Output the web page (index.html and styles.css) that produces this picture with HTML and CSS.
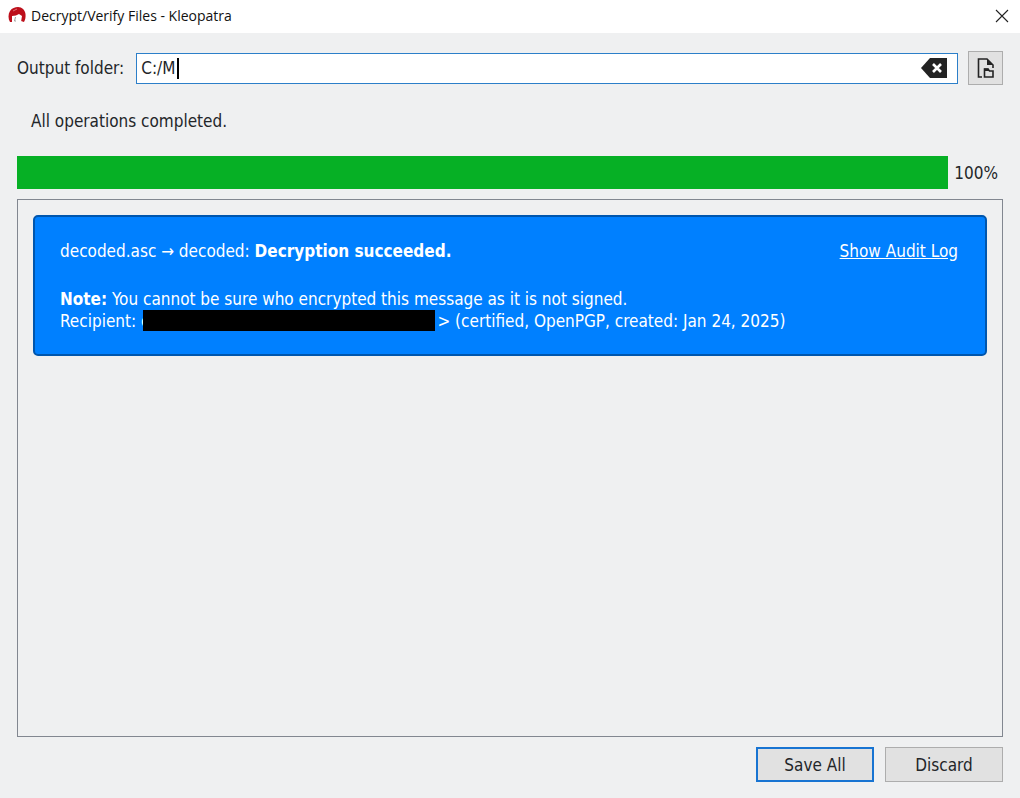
FILE: index.html
```html
<!DOCTYPE html>
<html lang="en">
<head>
    <meta charset="UTF-8">
    <meta name="viewport" content="width=device-width, initial-scale=1.0">
    <title>Decrypt/Verify Files - Kleopatra</title>
    <link rel="stylesheet" href="styles.css">
</head>
<body>
    <header class="titlebar">
        <svg class="app-icon" viewBox="0 0 18 18" aria-hidden="true">
            <path d="M2 15C0 12 0 7 2 4c2-3 5-4 8-4 4 0 7 3 7.500 7 .3 3-.2 6-1.500 8l-3-1-8 1z" fill="#bd0f1b"/>
            <path d="M4 9c3 0 5-1 7-2l3 2-1 6-3 2.500H6L4 15z" fill="#fff"/>
            <path d="M7.500 10L6.500 14h1.500" fill="none" stroke="#888" stroke-width=".8"/>
            <path d="M5 4l4-2" stroke="#dd7378" stroke-width="1"/>
        </svg>
        <h1>Decrypt/Verify Files - Kleopatra</h1>
        <button type="button" class="close" aria-label="Close">
            <svg viewBox="0 0 14 14" aria-hidden="true"><path d="M1 1l12 12M13 1L1 13" fill="none" stroke="#222" stroke-width="1.1"/></svg>
        </button>
    </header>

    <main class="dialog">
        <div class="folder-row">
            <label for="outputFolder">Output folder:</label>
            <div class="field">
                <input type="text" id="outputFolder" name="outputFolder" value="C:/M">
                <span class="caret"></span>
                <button type="button" class="clear" aria-label="Clear">
                    <svg viewBox="0 0 26 20" aria-hidden="true">
                        <path d="M0 10L9 0h17v20H9z" fill="#232323"/>
                        <path d="M12 6l8 8M20 6l-8 8" stroke="#fff" stroke-width="2.6"/>
                    </svg>
                </button>
            </div>
            <button type="button" class="browse" aria-label="Select folder">
                <svg viewBox="0 0 18 20" aria-hidden="true">
                    <path d="M5 19H1.500V1H10l6 6v3" fill="none" stroke="#232323" stroke-width="1.6"/>
                    <path d="M10 1v6h6z" fill="#232323"/>
                    <path d="M7.500 19v-8H11l1.500 2H16v6z" fill="none" stroke="#232323" stroke-width="1.6"/>
                    <path d="M7 10.500h4.500l1 2.500H7z" fill="#232323"/>
                </svg>
            </button>
        </div>

        <p class="status" id="status">All operations completed.</p>

        <div class="progress-row">
            <progress value="100" max="100" aria-labelledby="status"></progress>
            <span>100%</span>
        </div>

        <section class="results">
            <article class="result">
                <div class="result-head">
                    <p>decoded.asc → decoded: <b>Decryption succeeded.</b></p>
                    <a href="#">Show Audit Log</a>
                </div>
                <p><b>Note:</b> You cannot be sure who encrypted this message as it is not signed.</p>
                <p>Recipient: c<span class="redacted"></span>&gt; (certified, OpenPGP, created: Jan 24, 2025)</p>
            </article>
        </section>

        <div class="actions">
            <button type="button" class="default">Save All</button>
            <button type="button">Discard</button>
        </div>
    </main>
</body>
</html>
```
FILE: styles.css
```css
* {
    box-sizing: border-box;
}

body {
    display: flex;
    flex-direction: column;
    min-height: 100vh;
    margin: 0;
    background: #eff0f1;
    color: #232629;
    font-family: "DejaVu Sans Condensed", "Noto Sans", sans-serif;
    font-size: 17px;
    line-height: 22px;
}

p {
    margin: 0;
}

button {
    padding: 0;
    font: inherit;
    color: inherit;
}

svg {
    display: block;
}

/* Title bar */
.titlebar {
    display: flex;
    align-items: center;
    height: 33px;
    padding: 0 11px 2px 8px;
    background: #fff;
}

.titlebar h1 {
    flex: 1;
    margin: 0 0 0 5px;
    color: #111;
    font-family: "Open Sans", "Noto Sans", sans-serif;
    font-size: 14px;
    font-weight: normal;
}

.app-icon {
    width: 18px;
    height: 18px;
}

.close {
    border: 0;
    background: none;
}

.close svg {
    width: 14px;
    height: 14px;
}

/* Dialog body */
.dialog {
    display: flex;
    flex: 1;
    flex-direction: column;
    padding: 18px 17px 16px;
}

.folder-row {
    display: flex;
    align-items: center;
    gap: 10px;
}

.folder-row label {
    padding-right: 2px;
}

.field {
    position: relative;
    flex: 1;
}

.field input {
    display: block;
    width: 100%;
    height: 31px;
    padding: 0 40px 0 4px;
    border: 1px solid #2c7fc9;
    outline: none;
    background: #fff;
    color: inherit;
    font: inherit;
}

.caret {
    position: absolute;
    top: 5px;
    left: 41px;
    width: 2px;
    height: 21px;
    background: #000;
}

.clear {
    position: absolute;
    top: 5px;
    right: 11px;
    border: 0;
    background: none;
}

.clear svg {
    width: 26px;
    height: 20px;
}

.browse {
    display: grid;
    place-items: center;
    width: 35px;
    height: 34px;
    border: 1px solid #adadad;
    background: #e1e1e1;
}

.browse svg {
    width: 18px;
    height: 20px;
}

.status {
    margin: 25px 14px 24px;
}

/* Progress */
.progress-row {
    display: flex;
    align-items: center;
    gap: 6px;
    padding-right: 5px;
}

progress {
    flex: 1;
    min-width: 0;
    height: 33px;
    border: 0;
    appearance: none;
    background: #06b025;
}

progress::-webkit-progress-bar {
    background: #e6e6e6;
}

progress::-webkit-progress-value {
    background: #06b025;
}

/* Results */
.results {
    flex: 1;
    margin: 10px 0;
    padding: 15px;
    border: 1px solid #828790;
}

.result {
    padding: 23px 27px 22px 25px;
    border: 2px solid #0056ad;
    border-radius: 5px;
    background: #0080ff;
    color: #fff;
}

.result-head {
    display: flex;
    justify-content: space-between;
    margin-bottom: 26px;
}

.result a {
    color: inherit;
}

.redacted {
    display: inline-block;
    width: 292px;
    height: 21px;
    margin: 0 2px 0 -6px;
    background: #000;
    vertical-align: top;
}

/* Buttons */
.actions {
    display: flex;
    justify-content: flex-end;
    gap: 11px;
}

.actions button {
    width: 118px;
    height: 35px;
    border: 1px solid #adadad;
    background: #e1e1e1;
}

.actions .default {
    border: 2px solid #1874d2;
}
```
